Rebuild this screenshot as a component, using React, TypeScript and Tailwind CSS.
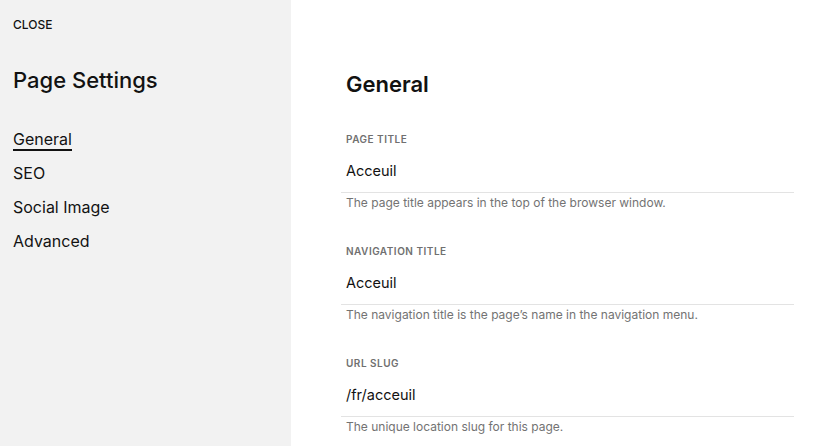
const fields = [
  {
    label: "PAGE TITLE",
    value: "Acceuil",
    help: "The page title appears in the top of the browser window.",
  },
  {
    label: "NAVIGATION TITLE",
    value: "Acceuil",
    help: "The navigation title is the page\u2019s name in the navigation menu.",
  },
  {
    label: "URL SLUG",
    value: "/fr/acceuil",
    help: "The unique location slug for this page.",
  },
];

const tabs = ["General", "SEO", "Social Image", "Advanced"];

function Sidebar() {
  return (
    <aside className="w-[291px] shrink-0 bg-[#f2f2f2] pl-[13px] text-[#121212]">
      <div className="mt-[17px] text-[12px] leading-[16px] font-medium">CLOSE</div>
      <h1 className="mt-[33px] text-[22px] leading-[28px] font-medium">Page Settings</h1>
      <nav className="mt-[35px] flex flex-col gap-[14px]">
        {tabs.map((t, i) => (
          <div key={t} className="text-[16px] leading-[20px]">
            <span className={i === 0 ? "inline-block shadow-[0_2px_0_#121212]" : "inline-block"}>{t}</span>
          </div>
        ))}
      </nav>
    </aside>
  );
}

function Field({ label, value, help, first }: { label: string; value: string; help: string; first: boolean }) {
  return (
    <div className={first ? "mt-[34px]" : "mt-[33px]"}>
      <div className="pl-[5px] text-[10px] leading-[14px] font-semibold tracking-[0.05em] text-[#707070]">
        {label}
      </div>
      <div className="mt-[15px] border-b border-[#e3e3e3] pb-[11px] pl-[5px] text-[14.5px] leading-[20px]">
        {value}
      </div>
      <div className="mt-[2px] pl-[5px] text-[12px] leading-[16px] text-[#737373]">{help}</div>
    </div>
  );
}

export default function App() {
  return (
    <div className="flex h-[446px] w-full overflow-hidden bg-white font-['Inter',sans-serif] text-[#121212]">
      <Sidebar />
      <main className="ml-[50px] w-[453px] pt-[70px]">
        <h2 className="pl-[5px] text-[22px] leading-[28px] font-semibold">General</h2>
        {fields.map((f, i) => (
          <Field key={f.label} {...f} first={i === 0} />
        ))}
      </main>
    </div>
  );
}
